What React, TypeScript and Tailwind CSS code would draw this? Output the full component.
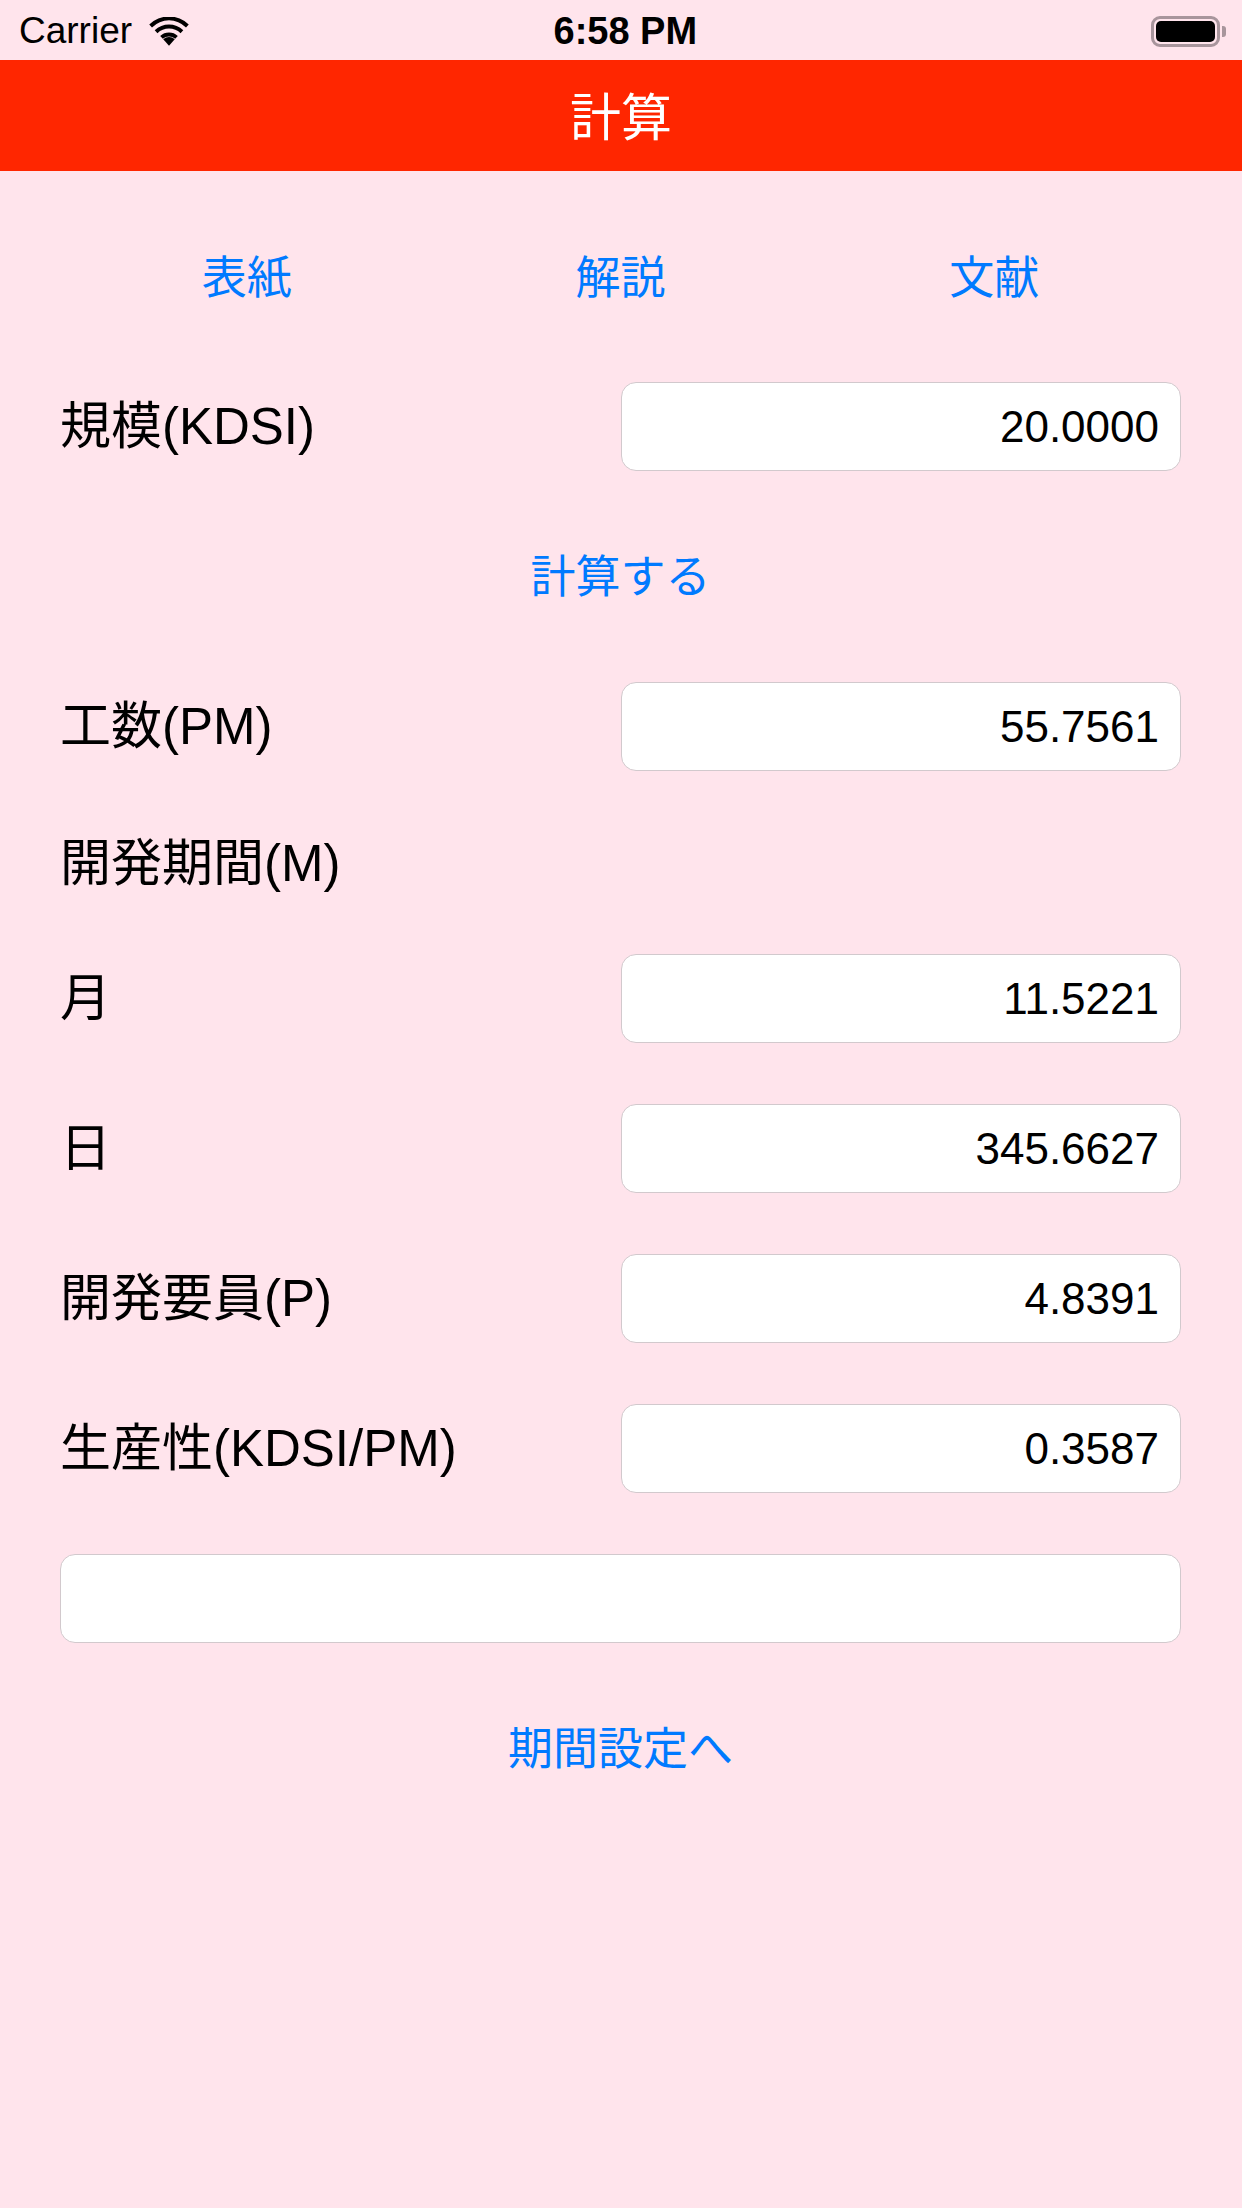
import React from 'react';

const rows = [
  { label: '月', value: '11.5221' },
  { label: '日', value: '345.6627' },
  { label: '開発要員(P)', value: '4.8391' },
  { label: '生産性(KDSI/PM)', value: '0.3587' },
];

function Field({ value, className = '' }: { value?: string; className?: string }) {
  return (
    <div
      className={`h-[89px] bg-white border-[1.5px] border-[#d2c9cd] rounded-[15px] flex items-center justify-end pr-[21px] text-[44px] text-black ${className}`}
    >
      {value}
    </div>
  );
}

function Row({ label, value, className = '' }: { label: string; value: string; className?: string }) {
  return (
    <div className={`flex items-center justify-between ${className}`}>
      <span className="text-[51px] text-black leading-none">{label}</span>
      <Field value={value} className="w-[560px]" />
    </div>
  );
}

function Wifi() {
  return (
    <svg width="42" height="30" viewBox="0 0 40 28" className="ml-[16px] mt-[2px]">
      <path d="M20 27 L14.5 21 A8 8 0 0 1 25.5 21 Z" fill="black" />
      <path d="M11.6 17.8 A12.5 12.5 0 0 1 28.4 17.8 L25.9 20.5 A9 9 0 0 0 14.1 20.5 Z" fill="black" />
      <path d="M6.4 12.3 A20 20 0 0 1 33.6 12.3 L31 15.1 A16 16 0 0 0 9 15.1 Z" fill="black" />
      <path d="M1.2 6.8 A27 27 0 0 1 38.8 6.8 L36.2 9.6 A23 23 0 0 0 3.8 9.6 Z" fill="black" />
    </svg>
  );
}

export default function App() {
  return (
    <div className="w-[1242px] h-[2208px] bg-[#ffe4ec] font-['Liberation_Sans','Noto_Sans_CJK_JP',sans-serif] flex flex-col">
      <div className="h-[60px] relative flex items-center pl-[19px] pr-[16px] pt-[2px]">
        <span className="text-[37px] text-black">Carrier</span>
        <Wifi />
        <span className="absolute left-1/2 -translate-x-[47%] text-[38px] font-bold text-black">6:58 PM</span>
        <div className="ml-auto flex items-center">
          <div className="w-[69px] h-[31px] rounded-[9px] border-[3px] border-[#a8959c] p-[2px]">
            <div className="w-full h-full bg-black rounded-[5px]" />
          </div>
          <div className="w-[4px] h-[11px] bg-[#a8959c] rounded-r-[3px] ml-[2px]" />
        </div>
      </div>

      <div className="h-[111px] bg-[#ff2600] flex items-center justify-center pt-[8px]">
        <span className="text-[51px] text-white">計算</span>
      </div>

      <div className="px-[60px] pr-[61px] flex flex-col">
        <div className="grid grid-cols-3 h-[90px] mt-[63px] items-center text-center text-[45px] text-[#007aff]">
          <span>表紙</span>
          <span>解説</span>
          <span>文献</span>
        </div>

        <Row label="規模(KDSI)" value="20.0000" className="mt-[58px]" />

        <div className="h-[90px] mt-[62px] flex items-center justify-center text-[45px] text-[#007aff]">
          計算する
        </div>

        <Row label="工数(PM)" value="55.7561" className="mt-[59px]" />

        <div className="h-[88px] mt-[48px] flex items-center">
          <span className="text-[51px] text-black leading-none">開発期間(M)</span>
        </div>

        <Row label={rows[0].label} value={rows[0].value} className="mt-[47px]" />
        {rows.slice(1).map((r) => (
          <Row key={r.label} label={r.label} value={r.value} className="mt-[61px]" />
        ))}

        <Field className="w-full mt-[61px]" />

        <div className="h-[90px] mt-[62px] flex items-center justify-center text-[45px] text-[#007aff]">
          期間設定へ
        </div>
      </div>
    </div>
  );
}
